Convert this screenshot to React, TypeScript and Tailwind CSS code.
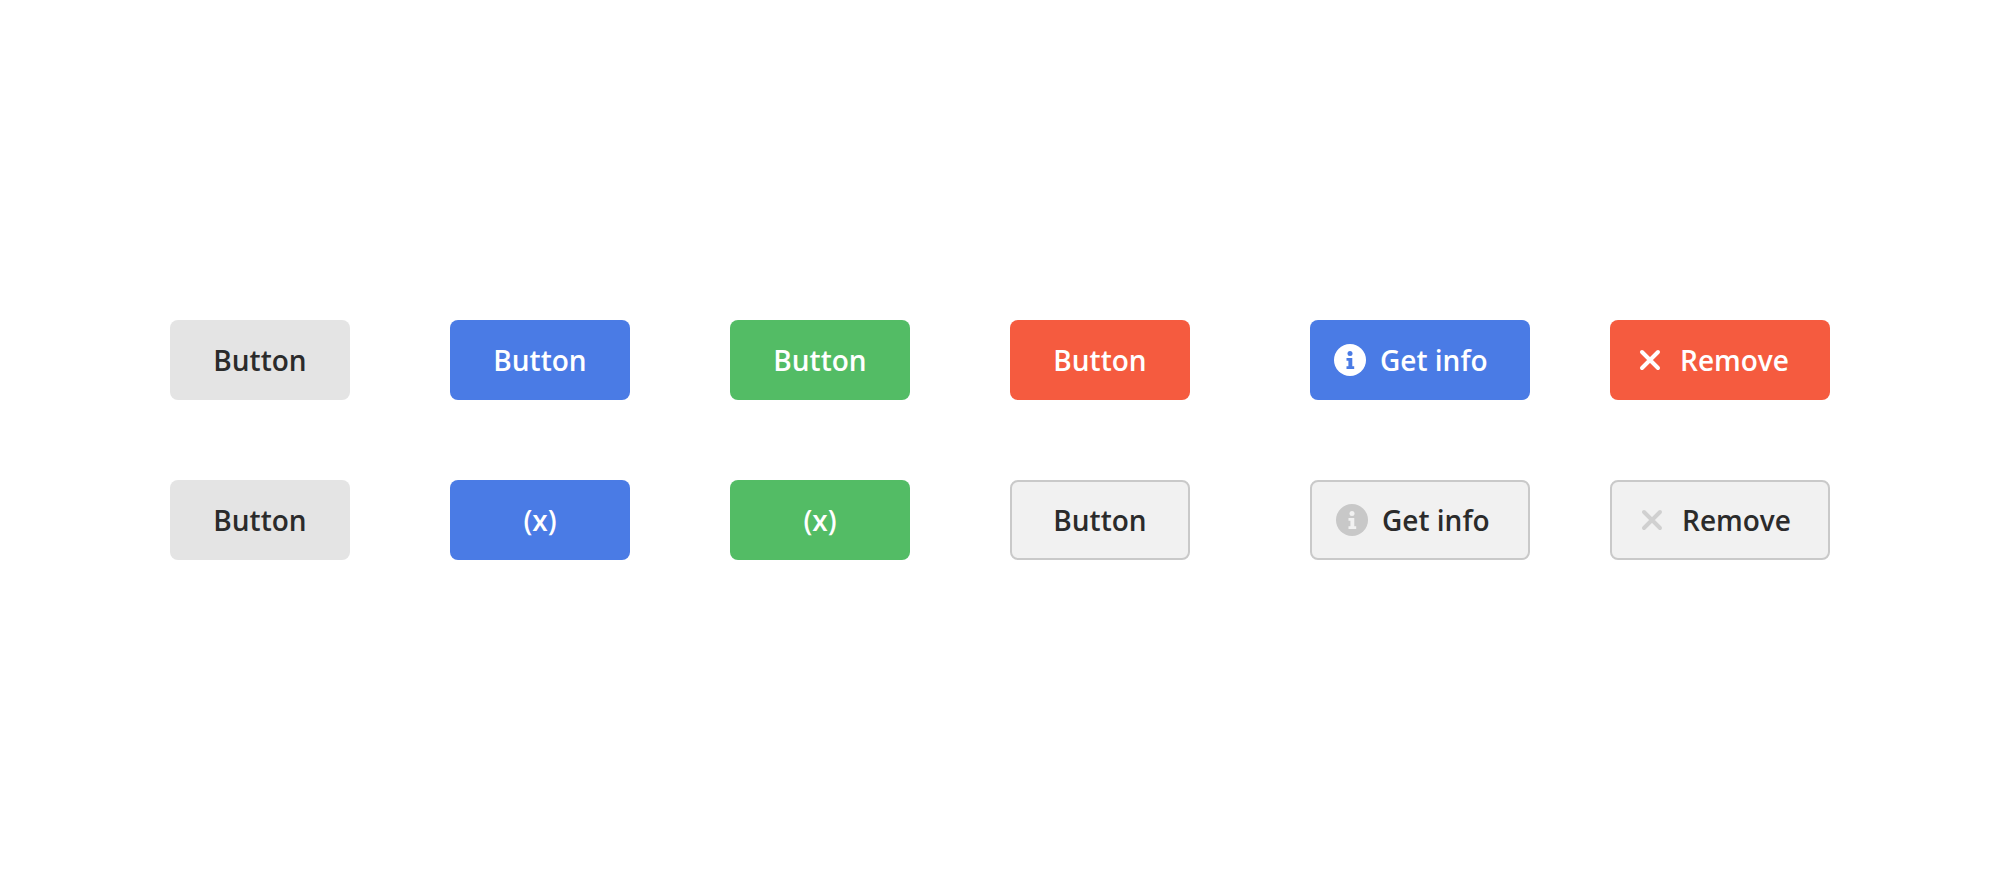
import type { ReactNode } from "react";

type Variant = "grey" | "blue" | "green" | "red" | "outline";

const variants: Record<Variant, string> = {
  grey: "bg-[#e4e4e4] text-[#2b2b2b]",
  blue: "bg-[#4a7be5] text-white",
  green: "bg-[#53bc65] text-white",
  red: "bg-[#f55b3f] text-white",
  outline: "bg-[#f1f1f1] text-[#2b2b2b] border-2 border-[#c9c9c9]",
};

function InfoIcon({ muted }: { muted?: boolean }) {
  return (
    <svg width="32" height="32" viewBox="0 0 32 32" className="shrink-0">
      <circle cx="16" cy="16" r="16" fill={muted ? "#c8c8c8" : "#ffffff"} />
      <g fill={muted ? "#f1f1f1" : "#4a7be5"}>
        <circle cx="16" cy="9.5" r="2.5" />
        <path d="M12.5 14h5.8v8.2h1.9V25h-7.7v-2.8h1.9v-5.4h-1.9z" />
      </g>
    </svg>
  );
}

function CloseIcon({ muted }: { muted?: boolean }) {
  return (
    <svg width="32" height="32" viewBox="0 0 32 32" className="shrink-0">
      <path
        d="M8 8l16 16M24 8L8 24"
        stroke={muted ? "#d0d0d0" : "#ffffff"}
        strokeWidth="4"
        strokeLinecap="round"
      />
    </svg>
  );
}

function Btn({
  variant,
  icon,
  className = "",
  children,
}: {
  variant: Variant;
  icon?: ReactNode;
  className?: string;
  children: ReactNode;
}) {
  const size = icon
    ? "w-[220px] justify-start pl-6 gap-3.5"
    : "w-[180px] justify-center";
  return (
    <button
      className={`h-20 flex items-center rounded-lg text-[28px] font-semibold box-border ${size} ${variants[variant]} ${className}`}
    >
      {icon}
      <span>{children}</span>
    </button>
  );
}

export default function App() {
  return (
    <div className="w-[2000px] h-[880px] bg-white pt-80 pl-[170px] flex flex-col gap-20 font-['Open_Sans',sans-serif]">
      <div className="flex">
        <Btn variant="grey">Button</Btn>
        <Btn variant="blue" className="ml-[100px]">Button</Btn>
        <Btn variant="green" className="ml-[100px]">Button</Btn>
        <Btn variant="red" className="ml-[100px]">Button</Btn>
        <Btn variant="blue" className="ml-[120px]" icon={<InfoIcon />}>Get info</Btn>
        <Btn variant="red" className="ml-20" icon={<CloseIcon />}>Remove</Btn>
      </div>
      <div className="flex">
        <Btn variant="grey">Button</Btn>
        <Btn variant="blue" className="ml-[100px]">(x)</Btn>
        <Btn variant="green" className="ml-[100px]">(x)</Btn>
        <Btn variant="outline" className="ml-[100px]">Button</Btn>
        <Btn variant="outline" className="ml-[120px]" icon={<InfoIcon muted />}>Get info</Btn>
        <Btn variant="outline" className="ml-20" icon={<CloseIcon muted />}>Remove</Btn>
      </div>
    </div>
  );
}
